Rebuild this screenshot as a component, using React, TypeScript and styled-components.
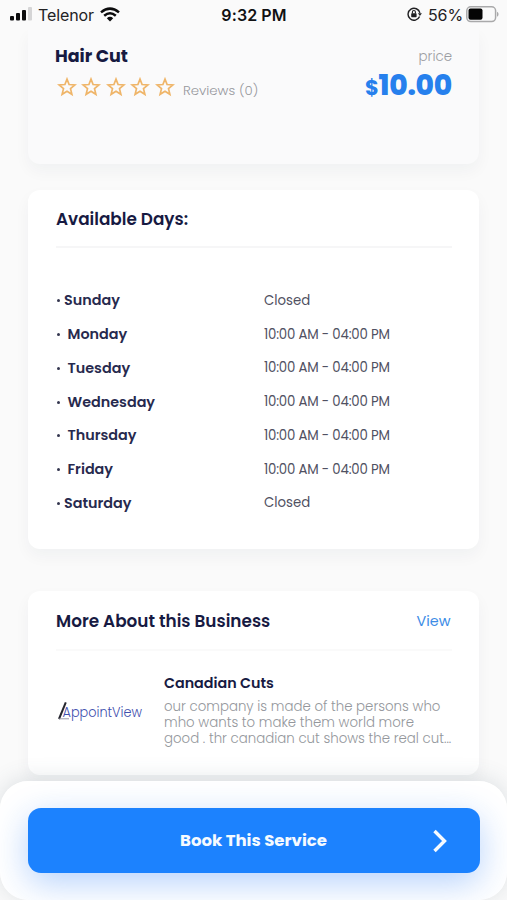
import React from "react";
import styled, { createGlobalStyle } from "styled-components";

const GlobalStyle = createGlobalStyle`
  * { box-sizing: border-box; }
  html, body { margin: 0; padding: 0; background: #fafafa; overflow: hidden; }
  body { font-family: Poppins, Inter, sans-serif; color: #171a42; }
  h1, h2, h3, p, ul { margin: 0; padding: 0; }
`;

const Screen = styled.div`
  width: 507px;
  height: 900px;
  overflow: hidden;
  display: flex;
  flex-direction: column;
  background: #fafafa;
`;

const StatusBar = styled.header`
  flex: none;
  height: 30px;
  padding: 0 8px 0 10px;
  display: grid;
  grid-template-columns: 1fr auto 1fr;
  align-items: center;
  font-family: Inter, sans-serif;
  font-size: 16px;
  color: #222224;
  position: relative;
  z-index: 1;
  background: #fafafa;
`;

const StatusGroup = styled.div<{ $end?: boolean }>`
  display: flex;
  align-items: center;
  justify-content: ${(p) => (p.$end ? "flex-end" : "flex-start")};
  gap: 6px;
  svg { display: block; flex: none; position: relative; top: -1px; }
`;

const Carrier = styled.span`
  letter-spacing: -0.1px;
`;

const Clock = styled.span`
  font-size: 16px;
  font-weight: 600;
  color: #111113;
  margin-right: 1px;
  letter-spacing: 0.1px;
`;

const Percent = styled.span`
  font-size: 16px;
  letter-spacing: -0.1px;
  margin-right: -3px;
`;

const Content = styled.main`
  flex: none;
  height: 751px;
  padding: 0 28px;
  display: flex;
  flex-direction: column;
`;

const Card = styled.section<{ $height: number; $gap?: number; $muted?: boolean }>`
  flex: none;
  width: 451px;
  height: ${(p) => p.$height}px;
  margin-top: ${(p) => p.$gap ?? 0}px;
  padding: 0 27px 0 28px;
  border-radius: ${(p) => (p.$muted ? "0 0 12px 12px" : "12px")};
  background: ${(p) => (p.$muted ? "#fafafb" : "#ffffff")};
  box-shadow: 0 7px 16px rgba(30, 40, 70, 0.045);
`;

const ServiceRow = styled.div`
  display: flex;
  justify-content: space-between;
  padding-top: 14px;
  margin-left: -1px;
`;

const ServiceName = styled.h1`
  font-size: 17.5px;
  line-height: 24px;
  font-weight: 700;
  letter-spacing: -0.05px;
`;

const Rating = styled.div`
  display: flex;
  align-items: center;
  gap: 4.4px;
  margin: 6px 0 0 2px;
  svg { display: block; }
`;

const Reviews = styled.span`
  margin: 8px 0 0 4px;
  font-size: 13.3px;
  line-height: 18px;
  font-weight: 300;
  color: #97989d;
`;

const PriceBlock = styled.div`
  display: flex;
  flex-direction: column;
  align-items: flex-end;
`;

const PriceLabel = styled.span`
  padding-top: 1px;
  font-size: 13.4px;
  line-height: 24px;
  font-weight: 300;
  color: #9c9da2;
`;

const Price = styled.strong`
  font-size: 28px;
  line-height: 34px;
  font-weight: 800;
  color: #2680ed;
  letter-spacing: -0.2px;
  small { font-size: 21px; font-weight: 700; letter-spacing: -0.3px; }
`;

const CardHeader = styled.div<{ $faint?: boolean }>`
  height: ${(p) => (p.$faint ? 60 : 58)}px;
  padding-top: 2px;
  display: flex;
  align-items: center;
  justify-content: space-between;
  border-bottom: 2px solid ${(p) => (p.$faint ? "#fafafa" : "#f6f6f7")};
`;

const CardTitle = styled.h2`
  font-size: 16.85px;
  line-height: 24px;
  font-weight: 600;
`;

const ViewLink = styled.a`
  font-size: 14.4px;
  line-height: 20px;
  color: #3c8ce6;
  margin-right: 1.5px;
`;

const DayList = styled.ul`
  list-style: none;
  padding-top: 36px;
`;

const DayRow = styled.li`
  height: 33.75px;
  display: grid;
  grid-template-columns: 208px 1fr;
  align-items: center;
  font-size: 14.35px;
`;

const DayName = styled.span<{ $closed: boolean }>`
  display: flex;
  align-items: center;
  gap: ${(p) => (p.$closed ? 4 : 7.5)}px;
  font-weight: 600;
  color: #272a4e;
  &::before {
    content: "";
    width: 3px;
    height: 3px;
    margin-left: 1px;
    border-radius: 50%;
    background: #34364f;
  }
`;

const Hours = styled.span<{ $closed: boolean }>`
  font-size: 13.3px;
  letter-spacing: ${(p) => (p.$closed ? 0 : -0.2)}px;
  color: #505162;
`;

const Business = styled.div`
  display: flex;
  padding-top: 21px;
`;

const LogoBox = styled.div`
  width: 108px;
  height: 80px;
  padding-top: 27px;
  svg { display: block; overflow: visible; }
`;

const BusinessText = styled.div`
  white-space: nowrap;
  flex: none;
`;

const BusinessName = styled.h3`
  font-size: 14.3px;
  line-height: 22px;
  font-weight: 600;
`;

const Description = styled.p`
  margin-top: 5px;
  font-size: 13.35px;
  line-height: 16.2px;
  font-weight: 300;
  color: #94979c;
`;

const DescriptionLine = styled.span`
  display: block;
`;

const BottomBar = styled.footer`
  flex: none;
  height: 119px;
  padding: 27px 27px 0 28px;
  border-radius: 28px;
  overflow: hidden;
  background: #ffffff;
`;

const BarShadow = styled.div`
  flex: none;
  position: relative;
  z-index: 1;
  border-radius: 28px;
  box-shadow: 0 -2px 22px rgba(70, 95, 115, 0.17);
`;

const BookButton = styled.button`
  width: 452px;
  height: 65px;
  padding: 0 32px 0 152px;
  display: flex;
  align-items: center;
  justify-content: space-between;
  border: 0;
  border-radius: 13px;
  background: #1c82fe;
  color: #f5faff;
  font: 700 16.55px/24px Poppins, Inter, sans-serif;
  box-shadow: 0 10px 34px rgba(28, 115, 245, 0.32);
`;

function Star() {
  return (
    <svg width="20" height="20" viewBox="0 0 20 20" fill="none" stroke="#efb569" strokeWidth="1.7">
      <path d="M10 2.1 12.1 7.5 18 7.9 13.5 11.6 14.9 17.3 10 14.2 5.1 17.3 6.5 11.6 2 7.9 7.9 7.5Z" />
    </svg>
  );
}

function SignalIcon() {
  return (
    <svg width="22" height="14" viewBox="0 0 22 14" fill="#0d0d0e">
      <rect x="0" y="9" width="4" height="4.5" rx="1" />
      <rect x="6" y="6" width="4" height="7.5" rx="1" />
      <rect x="12" y="3" width="4" height="10.5" rx="1" />
      <rect x="18" y="0" width="4" height="13.5" rx="1" fill="#d5d5d6" />
    </svg>
  );
}

function WifiIcon() {
  return (
    <svg width="20" height="15" viewBox="0 0 20 15" fill="none" stroke="#0c0c0d" strokeWidth="2.5">
      <path d="M1 5.4Q10-2.2 19 5.4" />
      <path d="M4.2 8.8Q10 3.8 15.8 8.8" />
      <path d="M6.8 11.2Q10 8.5 13.2 11.2L10 14.5Z" fill="#0c0c0d" stroke="none" />
    </svg>
  );
}

function RotationLockIcon() {
  return (
    <svg width="15" height="14" viewBox="0 0 15 14" fill="none" stroke="#202022" strokeWidth="1.4">
      <path d="M12.6 9.6A6 6 0 1 1 12.9 5.9" />
      <path d="M10.9 6.2h4l-2 2.8Z" fill="#202022" stroke="none" />
      <rect x="4.2" y="6.2" width="5.4" height="4.1" rx=".7" fill="#202022" stroke="none" />
      <path d="M5.4 6.6V5a1.5 1.5 0 0 1 3 0v1.6" strokeWidth="1.1" />
    </svg>
  );
}

function BatteryIcon() {
  return (
    <svg width="33" height="17" viewBox="0 0 33 17">
      <rect x=".8" y=".8" width="28.8" height="14.8" rx="4" fill="none" stroke="#a9a9aa" strokeWidth="1.5" />
      <rect x="2.5" y="2.6" width="14" height="11.2" rx="2" fill="#050505" />
      <path d="M31 5.8c2 .8 2 4.2 0 5Z" fill="#a9a9aa" />
    </svg>
  );
}

function AppointViewLogo() {
  return (
    <svg width="88" height="24" viewBox="0 0 88 24">
      <text
        x="6.5"
        y="18"
        textLength="79.5"
        lengthAdjust="spacingAndGlyphs"
        fontFamily="Poppins, Lato, sans-serif"
        fontWeight="300"
        fontSize="14"
        fill="#3f4fae"
      >
        AppointView
      </text>
      <path d="M3 20 9.8 3.4" stroke="#24252d" strokeWidth="2" />
      <path d="M3 19.8h10" stroke="#8e8f9f" strokeWidth=".9" />
    </svg>
  );
}

const days = [
  { name: "Sunday", hours: "Closed" },
  { name: "Monday", hours: "10:00 AM - 04:00 PM" },
  { name: "Tuesday", hours: "10:00 AM - 04:00 PM" },
  { name: "Wednesday", hours: "10:00 AM - 04:00 PM" },
  { name: "Thursday", hours: "10:00 AM - 04:00 PM" },
  { name: "Friday", hours: "10:00 AM - 04:00 PM" },
  { name: "Saturday", hours: "Closed" },
];

export default function App() {
  return (
    <>
      <GlobalStyle />
      <Screen>
        <StatusBar>
          <StatusGroup>
            <SignalIcon />
            <Carrier>Telenor</Carrier>
            <WifiIcon />
          </StatusGroup>
          <Clock>9:32 PM</Clock>
          <StatusGroup $end>
            <RotationLockIcon />
            <Percent>56%</Percent>
            <BatteryIcon />
          </StatusGroup>
        </StatusBar>
        <Content>
          <Card $height={134} $muted>
            <ServiceRow>
              <div>
                <ServiceName>Hair Cut</ServiceName>
                <Rating>
                  {[0, 1, 2, 3, 4].map((i) => <Star key={i} />)}
                  <Reviews>Reviews (0)</Reviews>
                </Rating>
              </div>
              <PriceBlock>
                <PriceLabel>price</PriceLabel>
                <Price><small>$</small>10.00</Price>
              </PriceBlock>
            </ServiceRow>
          </Card>
          <Card $height={359} $gap={26}>
            <CardHeader>
              <CardTitle>Available Days:</CardTitle>
            </CardHeader>
            <DayList>
              {days.map((day) => (
                <DayRow key={day.name}>
                  <DayName $closed={day.hours === "Closed"}>{day.name}</DayName>
                  <Hours $closed={day.hours === "Closed"}>{day.hours}</Hours>
                </DayRow>
              ))}
            </DayList>
          </Card>
          <Card $height={184} $gap={42}>
            <CardHeader $faint>
              <CardTitle>More About this Business</CardTitle>
              <ViewLink>View</ViewLink>
            </CardHeader>
            <Business>
              <LogoBox><AppointViewLogo /></LogoBox>
              <BusinessText>
                <BusinessName>Canadian Cuts</BusinessName>
                <Description>
                  <DescriptionLine>our company is made of the persons who</DescriptionLine>
                  <DescriptionLine>mho wants to make them world more</DescriptionLine>
                  <DescriptionLine>good . thr canadian cut shows the real cut...</DescriptionLine>
                </Description>
              </BusinessText>
            </Business>
          </Card>
        </Content>
        <BarShadow>
          <BottomBar>
            <BookButton>
              Book This Service
              <svg width="16" height="24" viewBox="0 0 16 24" fill="none" stroke="#f5faff" strokeWidth="3.4">
                <path d="M2.5 2 12.5 12 2.5 22" />
              </svg>
            </BookButton>
          </BottomBar>
        </BarShadow>
      </Screen>
    </>
  );
}
